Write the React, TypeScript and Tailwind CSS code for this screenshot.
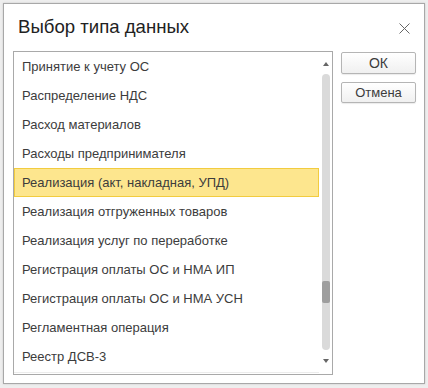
import React from "react";

const items = [
  "Принятие к учету ОС",
  "Распределение НДС",
  "Расход материалов",
  "Расходы предпринимателя",
  "Реализация (акт, накладная, УПД)",
  "Реализация отгруженных товаров",
  "Реализация услуг по переработке",
  "Регистрация оплаты ОС и НМА ИП",
  "Регистрация оплаты ОС и НМА УСН",
  "Регламентная операция",
  "Реестр ДСВ-3",
];

export default function App() {
  return (
    <div
      className="w-[428px] h-[388px] bg-[#eeeeee] pt-[3px] pl-[3px]"
      style={{ fontFamily: '"Liberation Sans", Arial, sans-serif' }}
    >
      <div className="w-[422px] h-[381px] bg-white border border-[#a8a8a8] shadow-[0_0_2px_rgba(0,0,0,0.15)] flex flex-col">
        <div className="h-[47px] flex items-start justify-between pl-[14px] pr-[14px]">
          <div className="mt-[12px] text-[18.6px] leading-[22px] text-[#222]">Выбор типа данных</div>
          <svg className="mt-[19px]" width="11" height="11" viewBox="0 0 11 11">
            <path d="M0.5 0.5 L10.5 10.5 M10.5 0.5 L0.5 10.5" stroke="#666" strokeWidth="1" />
          </svg>
        </div>
        <div className="flex pl-[9px] gap-[8px]">
          <div className="w-[320px] h-[324px] border border-[#a9a9a9] flex">
            <div className="flex-1 flex flex-col">
              {items.map((t, i) => (
                <div
                  key={i}
                  className={
                    i === 4
                      ? "h-[29px] flex items-center pl-[7px] text-[13px] text-[#3c3c3c] bg-[#fde68e] border border-[#f2cc3f]"
                      : "h-[29px] flex items-center pl-[8px] text-[13px] text-[#3c3c3c]"
                  }
                >
                  {t}
                </div>
              ))}
              <div className="mt-auto h-[2px] border-t border-[#ececec]" />
            </div>
            <div className="w-[13px] flex flex-col items-center">
              <svg className="mt-[10px]" width="6" height="4" viewBox="0 0 6 4">
                <path d="M3 0 L6 4 L0 4 Z" fill="#666" />
              </svg>
              <div className="mt-[8px] w-[8px] h-[276px] rounded-[4px] bg-[#dadada] flex flex-col">
                <div className="mt-[207px] h-[22px] w-[8px] rounded-[2px] bg-[#9e9e9e]" />
              </div>
              <svg className="mt-[9px]" width="6" height="4" viewBox="0 0 6 4">
                <path d="M0 0 L6 0 L3 4 Z" fill="#666" />
              </svg>
            </div>
          </div>
          <div className="flex flex-col gap-[8px] pt-[1px]">
            <button className="w-[75px] h-[22px] border border-[#b5b5b5] rounded-[2px] bg-gradient-to-b from-white to-[#f0f0f0] text-[14px] text-[#3c3c3c] leading-none shadow-[0_1px_1px_rgba(0,0,0,0.08)]">
              ОК
            </button>
            <button className="w-[75px] h-[21px] border border-[#b5b5b5] rounded-[2px] bg-gradient-to-b from-white to-[#f0f0f0] text-[13px] text-[#3c3c3c] leading-none shadow-[0_1px_1px_rgba(0,0,0,0.08)]">
              Отмена
            </button>
          </div>
        </div>
      </div>
    </div>
  );
}
